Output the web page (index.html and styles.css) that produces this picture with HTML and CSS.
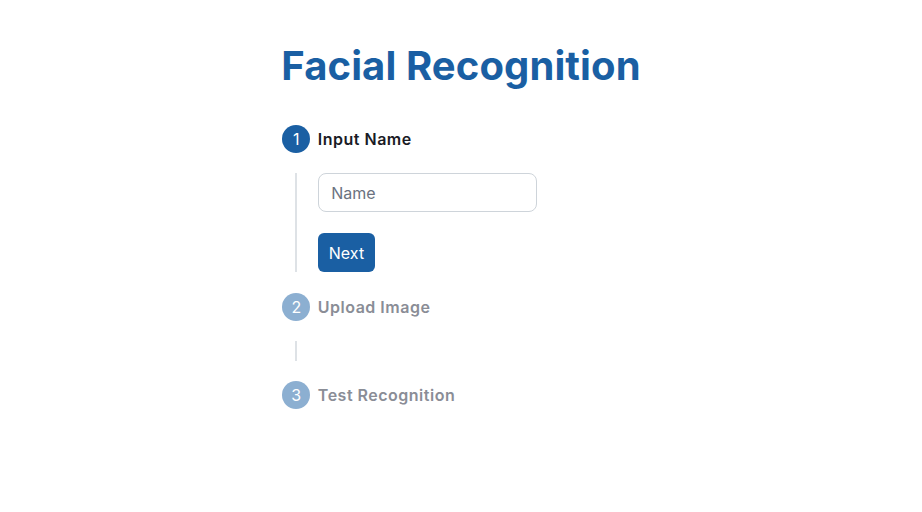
FILE: index.html
```html
<!DOCTYPE html>
<html lang="en">
<head>
<meta charset="utf-8">
<title>Facial Recognition</title>
<link rel="stylesheet" href="styles.css">
</head>
<body>
<main class="page">
  <div class="wrap">
    <h1 class="title">Facial Recognition</h1>
    <div class="stepper">
      <div class="step active">
        <div class="step-head">
          <span class="num">1</span>
          <span class="label">Input Name</span>
        </div>
        <div class="step-body">
          <div class="rail"></div>
          <div class="content">
            <input class="field" type="text" placeholder="Name">
            <button class="btn">Next</button>
          </div>
        </div>
      </div>
      <div class="step">
        <div class="step-head">
          <span class="num">2</span>
          <span class="label">Upload Image</span>
        </div>
        <div class="step-body">
          <div class="rail"></div>
          <div class="content empty"></div>
        </div>
      </div>
      <div class="step">
        <div class="step-head">
          <span class="num">3</span>
          <span class="label">Test Recognition</span>
        </div>
      </div>
    </div>
  </div>
</main>
</body>
</html>
```

FILE: styles.css
```css
* { box-sizing: border-box; }
html, body { margin: 0; background: #ffffff; }
body { font-family: Inter, "Noto Sans", sans-serif; color: #1a1b25; }

.page {
  display: flex;
  justify-content: center;
  padding-top: 42px;
}
.wrap {
  display: flex;
  flex-direction: column;
  align-items: flex-start;
}
.title {
  margin: 0;
  font-size: 40px;
  line-height: 48px;
  font-weight: 700;
  letter-spacing: 0.1px;
  color: #1a5fa3;
}
.stepper {
  margin: 35px 0 0 1px;
  display: flex;
  flex-direction: column;
}
.step-head {
  display: flex;
  align-items: center;
  gap: 7.5px;
  height: 28px;
}
.num {
  width: 28px;
  height: 28px;
  border-radius: 50%;
  background: #1a5fa3;
  color: #fff;
  font-size: 16px;
  display: flex;
  align-items: center;
  justify-content: center;
}
.label {
  font-size: 16px;
  font-weight: 600;
  letter-spacing: 0.5px;
  color: #1a1b25;
}
.step:not(.active) .num { background: #8cafd1; }
.step:not(.active) .label { color: #8a8d96; }

.step-body {
  display: flex;
  padding: 20px 0 20px 13px;
}
.step.active .step-body { padding-bottom: 21px; }
.rail {
  width: 2px;
  background: #dee2e6;
  margin-right: 21px;
}
.content {
  display: flex;
  flex-direction: column;
  align-items: flex-start;
  gap: 21px;
}
.content.empty { height: 20px; }
.field {
  width: 219px;
  height: 39px;
  border: 1px solid #ced4da;
  border-radius: 8px;
  padding: 0 12px;
  font-family: inherit;
  font-size: 16px;
  color: #1a1b25;
  outline: none;
}
.field::placeholder { color: #6b7280; }
.btn {
  height: 39px;
  padding: 0 10.5px;
  border: none;
  border-radius: 6px;
  background: #1a5fa3;
  color: #fff;
  font-family: inherit;
  font-size: 16px;
  cursor: pointer;
}
```
